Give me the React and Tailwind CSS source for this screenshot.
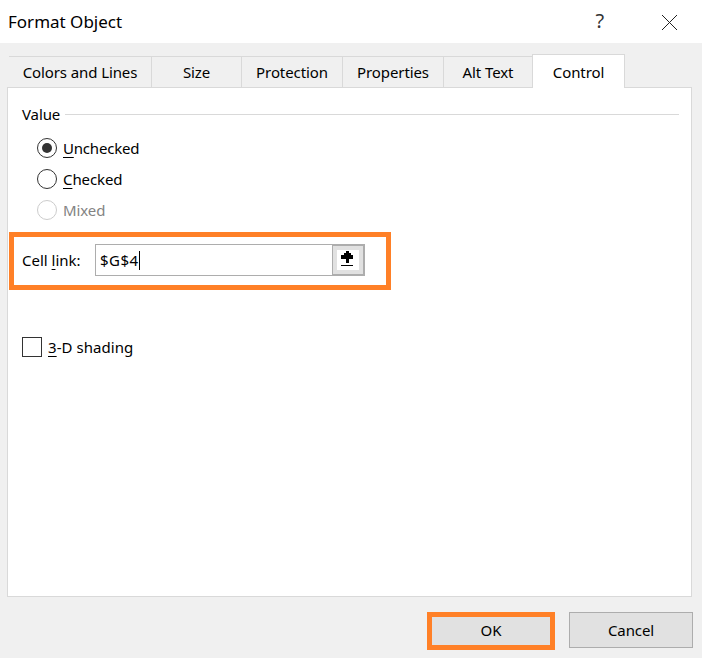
function U({ children }) {
  return <span className="underline underline-offset-[3px] decoration-1">{children}</span>;
}
function Tab({ w, children }) {
  return (
    <div className={`${w} h-[31px] border-t border-r border-[#d9d9d9] flex items-center justify-center text-black`}>
      {children}
    </div>
  );
}
function Radio({ checked, disabled, children }) {
  return (
    <div className="flex items-center h-[31px]">
      <div className={`w-[20px] h-[20px] rounded-full border-[1.5px] bg-white flex items-center justify-center ${disabled ? "border-[#cccccc]" : "border-[#333333]"}`}>
        {checked && <div className="w-[10px] h-[10px] rounded-full bg-[#333333]" />}
      </div>
      <span className={`ml-[6px] ${disabled ? "text-[#838383]" : "text-black"}`}>{children}</span>
    </div>
  );
}
export default function App() {
  return (
    <div className="w-[702px] h-[658px] overflow-hidden bg-[#f0f0f0] text-[15px] leading-[20px] tracking-[-0.1px] text-black font-['Noto_Sans',sans-serif] flex flex-col">
      <div className="h-[43px] shrink-0 bg-white flex items-center">
        <span className="ml-[8px] text-[17px] tracking-normal">Format Object</span>
        <span className="ml-auto mr-[58px] text-[20px] text-[#333] -mt-[1px]">?</span>
        <svg className="mr-[25px] mt-[2px]" width="15" height="15" viewBox="0 0 15 15" fill="none" stroke="#222" strokeWidth="1">
          <path d="M0 0 L15 15 M15 0 L0 15" />
        </svg>
      </div>
      <div className="h-[44px] shrink-0 flex items-end pl-[9px] relative z-10">
        <Tab w="w-[143px]">Colors and Lines</Tab>
        <Tab w="w-[90px]">Size</Tab>
        <Tab w="w-[101px]">Protection</Tab>
        <Tab w="w-[101px]">Properties</Tab>
        <Tab w="w-[89px]">Alt Text</Tab>
        <div className="w-[93px] h-[34px] -mb-px -ml-px border border-b-0 border-[#d9d9d9] bg-white flex items-center justify-center">
          Control
        </div>
      </div>
      <div className="w-[685px] h-[510px] ml-[7px] shrink-0 bg-white border border-[#d9d9d9] flex flex-col">
        <div className="flex items-center mt-[16px] ml-[14px] mr-[12px] h-[20px]">
          <span>Value</span>
          <div className="flex-1 h-px bg-[#d9d9d9] ml-[5px]" />
        </div>
        <div className="ml-[29px] mt-[8px] flex flex-col">
          <Radio checked><span className="tracking-[-0.2px]"><U>U</U>nchecked</span></Radio>
          <Radio><U>C</U>hecked</Radio>
          <Radio disabled>Mixed</Radio>
        </div>
        <div className="w-[382px] h-[58px] ml-[1px] mt-[7px] border-[5px] border-[#ff8027] flex items-center pl-[8px] pb-[2px]">
          <span className="w-[73px] tracking-normal">Cell <U>l</U>ink:</span>
          <div className="w-[270px] h-[32px] flex">
            <div className="flex-1 pl-[4px] flex items-center border border-r-0 border-[#adadad]">
              <span className="tracking-[0.5px]">$G$4</span>
              <span className="w-px h-[19px] bg-black" />
            </div>
            <div className="w-[33px] h-[32px] border-2 border-l border-[#adadad] bg-[#e1e1e1] flex items-center justify-center">
              <div className="w-[22px] h-[20px] bg-white flex items-center justify-center">
                <svg className="mr-[2px] mb-[2px]" width="12" height="16" viewBox="0 0 12 16" fill="#000" shapeRendering="crispEdges">
                  <path d="M5 0h3v2h2v2h2v4H8v4H5V8H0V4h3V2h2z" />
                  <rect x="0" y="14" width="12" height="1" />
                </svg>
              </div>
            </div>
          </div>
        </div>
        <div className="flex items-center ml-[14px] mt-[47px]">
          <div className="w-[20px] h-[20px] border-[1.5px] border-[#333333] bg-white" />
          <span className="ml-[6px] tracking-[0.05px]"><U>3</U>-D shading</span>
        </div>
      </div>
      <div className="flex-1 flex items-start pt-[15px] pl-[427px]">
        <div className="w-[128px] h-[38px] border-[5px] border-[#ff8027] bg-[#e1e1e1] flex items-center justify-center pb-[2px]">OK</div>
        <div className="w-[124px] h-[36px] ml-[14px] border border-[#adadad] bg-[#e1e1e1] flex items-center justify-center">Cancel</div>
      </div>
    </div>
  );
}
